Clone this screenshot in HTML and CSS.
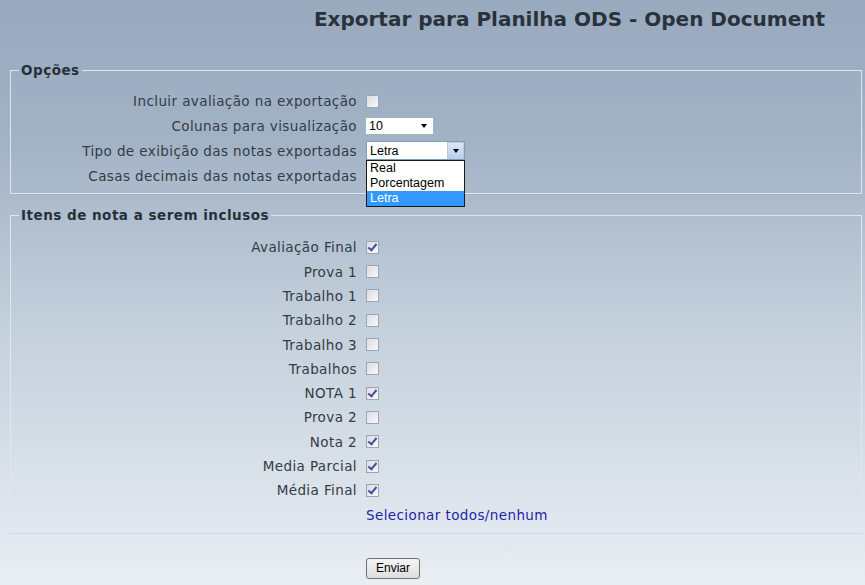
FILE: index.html
```html
<!DOCTYPE html>
<html lang="pt-BR">
<head>
    <meta charset="UTF-8">
    <title>Exportar para Planilha ODS</title>
    <link rel="stylesheet" href="styles.css">
</head>
<body>
    <h1 class="title">Exportar para Planilha ODS - Open Document</h1>

    <form class="export-form">
        <fieldset class="group">
            <legend>Opções</legend>
            <div class="row">
                <label>Incluir avaliação na exportação</label>
                <input type="checkbox" class="check">
            </div>
            <div class="row">
                <label>Colunas para visualização</label>
                <div class="select plain">
                    <span>10</span>
                    <span class="arrow"></span>
                </div>
            </div>
            <div class="row">
                <label>Tipo de exibição das notas exportadas</label>
                <div class="select open">
                    <span>Letra</span>
                    <span class="arrow-btn"><span class="arrow"></span></span>
                    <ul class="options">
                        <li>Real</li>
                        <li>Porcentagem</li>
                        <li class="selected">Letra</li>
                    </ul>
                </div>
            </div>
            <div class="row">
                <label>Casas decimais das notas exportadas</label>
            </div>
        </fieldset>

        <fieldset class="group items">
            <legend>Itens de nota a serem inclusos</legend>
            <div class="row"><label>Avaliação Final</label><input type="checkbox" class="check" checked></div>
            <div class="row"><label>Prova 1</label><input type="checkbox" class="check"></div>
            <div class="row"><label>Trabalho 1</label><input type="checkbox" class="check"></div>
            <div class="row"><label>Trabalho 2</label><input type="checkbox" class="check"></div>
            <div class="row"><label>Trabalho 3</label><input type="checkbox" class="check"></div>
            <div class="row"><label>Trabalhos</label><input type="checkbox" class="check"></div>
            <div class="row"><label>NOTA 1</label><input type="checkbox" class="check" checked></div>
            <div class="row"><label>Prova 2</label><input type="checkbox" class="check"></div>
            <div class="row"><label>Nota 2</label><input type="checkbox" class="check" checked></div>
            <div class="row"><label>Media Parcial</label><input type="checkbox" class="check" checked></div>
            <div class="row"><label>Média Final</label><input type="checkbox" class="check" checked></div>
            <div class="row"><label></label><a href="#" class="toggle-all">Selecionar todos/nenhum</a></div>
        </fieldset>

        <div class="actions">
            <button type="button" class="btn">Enviar</button>
        </div>
    </form>
</body>
</html>
```

FILE: styles.css
```css
* {
    box-sizing: border-box;
}

html {
    height: 100%;
}

body {
    margin: 0;
    padding: 0 3px 0 10px;
    min-height: 100%;
    font-family: 'DejaVu Sans', Verdana, sans-serif;
    font-size: 13.5px;
    letter-spacing: 0.4px;
    color: #333b44;
    background: linear-gradient(to bottom, #99aabe 0%, #a3b3c6 25%, #c3cfdb 55%, #e9eef3 100%);
}

.title {
    margin: 0;
    padding: 7px 37px 0 0;
    height: 62px;
    text-align: right;
    font-size: 20px;
    line-height: 24px;
    font-weight: bold;
    letter-spacing: 0;
    color: #29323c;
}

.group {
    margin: 0;
    padding: 11px 0 5px 0;
    border: 1px solid #dfe6ee;
    box-shadow: 0 1px 0 rgba(120, 135, 155, 0.15);
}

.group legend {
    margin-left: 8px;
    padding: 0 2px;
    font-weight: bold;
    font-size: 13.5px;
    letter-spacing: 0.5px;
    line-height: 16px;
    color: #26303a;
}

.group .row {
    height: 24.8px;
}

.items {
    margin-top: 13px;
    padding-top: 12px;
    padding-bottom: 5px;
}

.items .row {
    height: 24.3px;
}

.row {
    display: flex;
    align-items: center;
}

.row label {
    width: 346px;
    text-align: right;
    white-space: nowrap;
}

.check {
    appearance: none;
    margin: 0 0 0 9px;
    width: 13px;
    height: 13px;
    border: 1px solid #9aa6b6;
    background: linear-gradient(135deg, #dcdde2, #f8f8fa);
    position: relative;
}

.check:checked::before {
    content: "";
    position: absolute;
    left: 3px;
    top: 0px;
    width: 3px;
    height: 7px;
    border: solid #4b4aa0;
    border-width: 0 2px 2px 0;
    transform: rotate(40deg);
}

.select {
    position: relative;
    margin-left: 9px;
    display: flex;
    align-items: center;
    background: #fff;
    font-family: 'Liberation Sans', Arial, sans-serif;
    font-size: 12.5px;
    letter-spacing: 0;
    color: #000;
}

.select.plain {
    width: 67px;
    height: 16px;
    padding-left: 3px;
    justify-content: space-between;
}

.select.plain .arrow {
    margin-right: 6px;
}

.arrow {
    width: 0;
    height: 0;
    border-left: 3.5px solid transparent;
    border-right: 3.5px solid transparent;
    border-top: 4px solid #000;
}

.select.open {
    width: 99px;
    height: 19px;
    padding-left: 3px;
    border: 1px solid #7f9db9;
    justify-content: space-between;
}

.arrow-btn {
    width: 17px;
    height: 17px;
    display: flex;
    align-items: center;
    justify-content: center;
    border: 1px solid #b8cbe2;
    background: linear-gradient(to bottom, #dbe7f6, #b9cfeb);
}

.options {
    position: absolute;
    left: -1px;
    top: 18px;
    width: 99px;
    margin: 0;
    padding: 0;
    list-style: none;
    background: #fff;
    border: 1px solid #1a1a1a;
}

.options li {
    height: 15px;
    line-height: 15px;
    padding-left: 3px;
}

.options li.selected {
    background: #3399ff;
    color: #fff;
}

.toggle-all {
    margin-left: 9px;
    color: #1f1fa8;
    text-decoration: none;
}

.actions {
    padding: 25px 0 0 356px;
}

.btn {
    width: 54px;
    height: 21px;
    padding: 0;
    font-family: 'Liberation Sans', Arial, sans-serif;
    font-size: 12px;
    color: #000;
    border: 1px solid #707070;
    border-radius: 3px;
    background: linear-gradient(to bottom, #f4f4f4, #dedede);
}
```
